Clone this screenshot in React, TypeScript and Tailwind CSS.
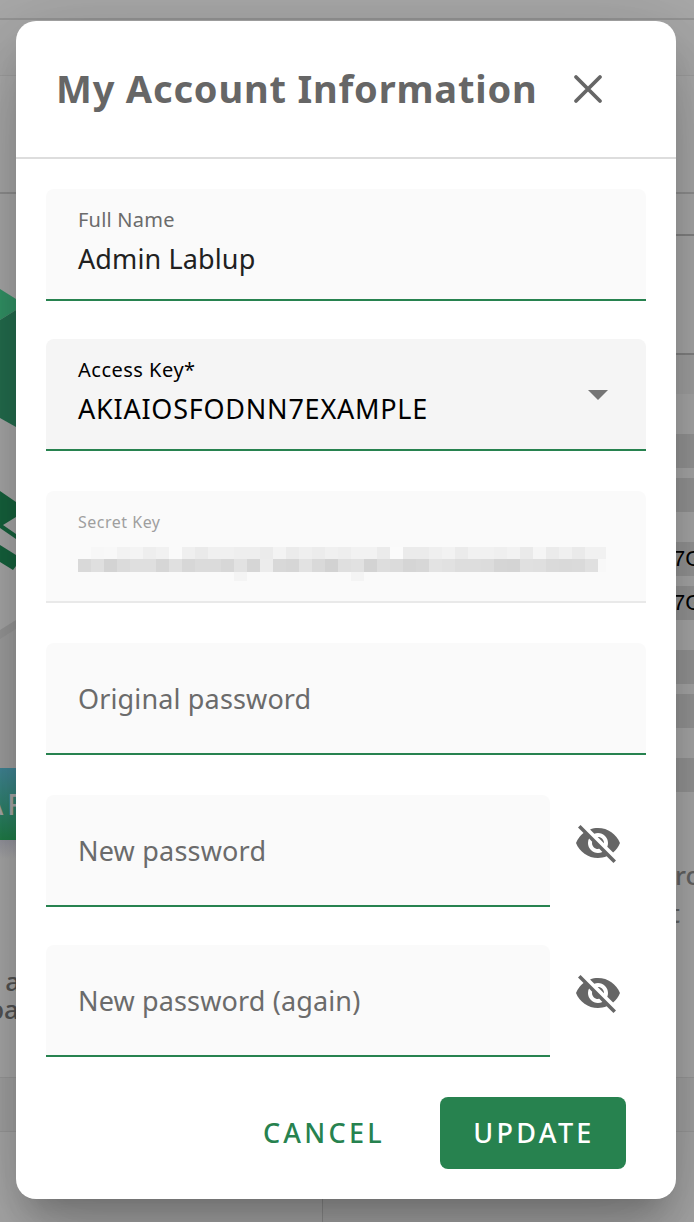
import type { ReactNode } from "react";

const upper = "fa f7 f8 f2 f4 ee f1 fa ef ea f0 f0 ee ee eb f3 eb ef ec f0 ee f2 f2 eb fb eb eb ef f2 eb f1 f1 ef f2 ea f5 eb f0 ea f1".split(" ");
const lower = "d9 df d3 db df df d6 e0 d7 db db d7 e2 d6 ec d8 d6 e2 d9 d2 df e1 d3 dd db d5 d7 e3 e1 dd dd dc d5 d4 e0 df da d9 da e0".split(" ");

function MaskedSecret() {
  return (
    <div className="flex flex-col pt-[13px]">
      <div className="flex h-3">
        {upper.map((c, i) => (
          <span key={i} className="w-[13px]" style={{ background: `#${c}${c}${c}` }} />
        ))}
        <span className="w-2 bg-[#f1f1f1]" />
      </div>
      <div className="flex h-[13px]">
        {lower.map((c, i) => (
          <span key={i} className="w-[13px]" style={{ background: `#${c}${c}${c}` }} />
        ))}
        <span className="w-2 bg-[#f8f8f8]" />
      </div>
      <div className="flex h-[9px] gap-[104px] pl-[156px]">
        <span className="w-[13px] bg-[#f4f4f4]" />
        <span className="w-[13px] bg-[#f4f4f4]" />
      </div>
    </div>
  );
}

function Field({ className, children }: { className: string; children: ReactNode }) {
  return (
    <div className={`h-28 rounded-t-[8px] border-b-2 pl-8 ${className}`}>{children}</div>
  );
}

function EyeOff() {
  return (
    <svg viewBox="0 0 24 24" className="h-12 w-12" fill="#666">
      <path d="M12 7c2.76 0 5 2.24 5 5 0 .65-.13 1.26-.36 1.83l2.92 2.92c1.51-1.26 2.7-2.89 3.43-4.75-1.73-4.39-6-7.5-11-7.5-1.4 0-2.74.25-3.98.7l2.16 2.16C10.74 7.13 11.35 7 12 7zM2 4.27l2.28 2.28.46.46A11.804 11.804 0 0 0 1 12c1.73 4.39 6 7.5 11 7.5 1.55 0 3.03-.3 4.38-.84l.42.42L19.73 22 21 20.73 3.27 3 2 4.27zM7.53 9.8l1.55 1.55c-.05.21-.08.43-.08.65 0 1.66 1.34 3 3 3 .22 0 .44-.03.65-.08l1.55 1.55c-.67.33-1.41.53-2.2.53-2.76 0-5-2.24-5-5 0-.79.2-1.53.53-2.2zm4.31-.78l3.15 3.15.02-.16c0-1.66-1.34-3-3-3l-.17.01z" />
    </svg>
  );
}

function PageBehind() {
  return (
    <div className="absolute inset-0 flex flex-col bg-[#a9a9a9] font-['Noto_Sans',sans-serif]">
      <div className="h-5 shrink-0 border-b-2 border-[#959595]" />
      <div className="h-[56px] shrink-0 border-b border-[#a0a0a0]" />
      <div className="h-[118px] shrink-0 border-b-2 border-[#929292] bg-[#acacac]" />
      <div className="flex h-[883px] shrink-0 justify-between">
        <div className="flex w-4 flex-col overflow-hidden bg-[#acacac]">
          <svg width="16" height="574" viewBox="0 194 16 574" className="shrink-0">
            <polygon points="0,638 16,628 16,768 0,768" fill="#a3a3a3" />
            <polygon points="0,630 16,620 16,629 0,639" fill="#9b9b9b" />
            <polygon points="0,289 16,299 16,310 0,320" fill="#349769" />
            <polygon points="0,320 16,310 16,427 0,418" fill="#257050" />
            <polygon points="0,491 16,502 16,517 3,525 16,534 16,539 0,528" fill="#17653f" />
            <polygon points="0,545 16,555 16,566 13,570 0,562" fill="#17653f" />
          </svg>
          <div className="flex h-[72px] w-4 shrink-0 items-center justify-end bg-linear-to-b from-[#43899a] to-[#218049] text-[28px] font-medium tracking-[4px] text-[#acacac]">
            <span className="-mr-[13px]">AR</span>
          </div>
          <div className="h-[127px] shrink-0 bg-linear-to-b from-[#9999a2] to-[#acacac] to-15%" />
          <div className="flex flex-col items-end text-[26px] leading-7 font-medium text-[#555]">
            <span className="-mr-[4px]">a</span>
            <span className="-mr-[3px]">pa</span>
          </div>
        </div>
        <div className="flex w-[18px] flex-col overflow-hidden bg-[#acacac] text-[24px] text-black">
          <div className="h-[42px] shrink-0 border-b-2 border-[#858585]" />
          <div className="h-[119px] shrink-0 border-b-2 border-[#858585]" />
          <div className="h-[39px] shrink-0 bg-[#a5a5a5]" />
          <div className="mt-10 h-[34px] shrink-0 bg-[#999]" />
          <div className="mt-[10px] h-[34px] shrink-0 bg-[#999]" />
          <div className="mt-[30px] h-[34px] shrink-0 bg-[#999] font-['Liberation_Sans',sans-serif] text-[22px] leading-[34px]"><span className="-ml-[3px]">7G</span></div>
          <div className="mt-[10px] h-[34px] shrink-0 bg-[#999] font-['Liberation_Sans',sans-serif] text-[22px] leading-[34px]"><span className="-ml-[3px]">7G</span></div>
          <div className="mt-[30px] h-[34px] shrink-0 bg-[#999]" />
          <div className="mt-[10px] h-[34px] shrink-0 bg-[#999]" />
          <div className="mt-[30px] h-[34px] shrink-0 bg-[#999]" />
          <div className="mt-[64px] text-[26px] leading-[38px] font-medium text-[#666]">
            <div className="-ml-px">ro</div>
            <div className="-ml-[6px]">t</div>
          </div>
        </div>
      </div>
      <div className="h-[55px] shrink-0 border-y border-[#9d9d9d] bg-[#a6a6a6]" />
      <div className="flex grow bg-[#a9a9a9]">
        <div className="w-[323px] border-r border-[#929292] bg-[#acacac]" />
      </div>
    </div>
  );
}

export default function App() {
  return (
    <div className="relative h-[1222px] w-[694px] overflow-hidden pt-[21px] pl-4">
      <PageBehind />
      <div className="relative flex h-[1178px] w-[660px] flex-col rounded-[20px] bg-white font-['Noto_Sans',sans-serif] shadow-[0_22px_30px_-14px_rgba(0,0,0,0.2),0_48px_76px_6px_rgba(0,0,0,0.14),0_18px_92px_16px_rgba(0,0,0,0.12)]">
        <header className="flex h-[138px] shrink-0 items-center justify-between border-b-2 border-[#ddd] pr-[64px] pl-[40px]">
          <h1 className="whitespace-nowrap pb-[2px] text-[38px] font-bold tracking-[0.82px] text-[#666]">My Account Information</h1>
          <svg viewBox="0 0 48 48" className="h-12 w-12 shrink-0" stroke="#666" strokeWidth="3.8" strokeLinecap="round">
            <path d="M12 12L36 36M36 12L12 36" />
          </svg>
        </header>
        <div className="flex flex-col px-[30px] pt-[30px]">
          <Field className="border-[#27824f] bg-[#fafafa]">
            <div className="pt-[17px] text-[20px] leading-7 tracking-[0.22px] text-[#6b6b6b]"><span>Full Name</span></div>
            <div className="pt-[3px] text-[27px] leading-[44px] tracking-[0.12px] text-[#212121]"><span>Admin Lablup</span></div>
          </Field>
          <Field className="mt-[38px] flex justify-between border-[#27824f] bg-[#f5f5f5] pr-[38px]">
            <div>
              <div className="pt-[17px] text-[20px] leading-7 tracking-[0.5px] text-black"><span>Access Key*</span></div>
              <div className="pt-[3px] text-[27px] leading-[44px] tracking-[0.76px] text-black"><span>AKIAIOSFODNN7EXAMPLE</span></div>
            </div>
            <svg viewBox="0 0 20 10" className="mt-[51px] h-[10px] w-5" fill="#757575">
              <path d="M0 0h20L10 10z" />
            </svg>
          </Field>
          <Field className="mt-10 border-[#e9e9e9] bg-[#fafafa]">
            <div className="pt-[19px] text-[16px] leading-6 tracking-[0.5px] text-[#9f9f9f]"><span>Secret Key</span></div>
            <MaskedSecret />
          </Field>
          <Field className="mt-10 flex items-center border-[#27824f] bg-[#fafafa] pt-[2px] text-[27px] tracking-[0.14px] text-[#6b6b6b]">
            <span>Original password</span>
          </Field>
          <div className="mt-10 flex gap-6">
            <Field className="flex w-[504px] items-center border-[#27824f] bg-[#fafafa] pt-[2px] text-[27px] tracking-[0.2px] text-[#6b6b6b]">
              <span>New password</span>
            </Field>
            <div className="pt-6"><EyeOff /></div>
          </div>
          <div className="mt-[38px] flex gap-6">
            <Field className="flex w-[504px] items-center border-[#27824f] bg-[#fafafa] pt-[2px] text-[27px] tracking-[0.14px] text-[#6b6b6b]">
              <span>New password (again)</span>
            </Field>
            <div className="pt-6"><EyeOff /></div>
          </div>
        </div>
        <footer className="flex justify-end gap-[26px] pt-10 pr-[50px] text-[27px] font-medium">
          <button className="h-[72px] w-[182px] text-[#27824f]"><span className="-mr-[2px] tracking-[3.3px]">CANCEL</span></button>
          <button className="h-[72px] w-[186px] rounded-[8px] bg-[#27824f] text-white"><span className="-mr-[2px] tracking-[3.3px]">UPDATE</span></button>
        </footer>
      </div>
    </div>
  );
}
